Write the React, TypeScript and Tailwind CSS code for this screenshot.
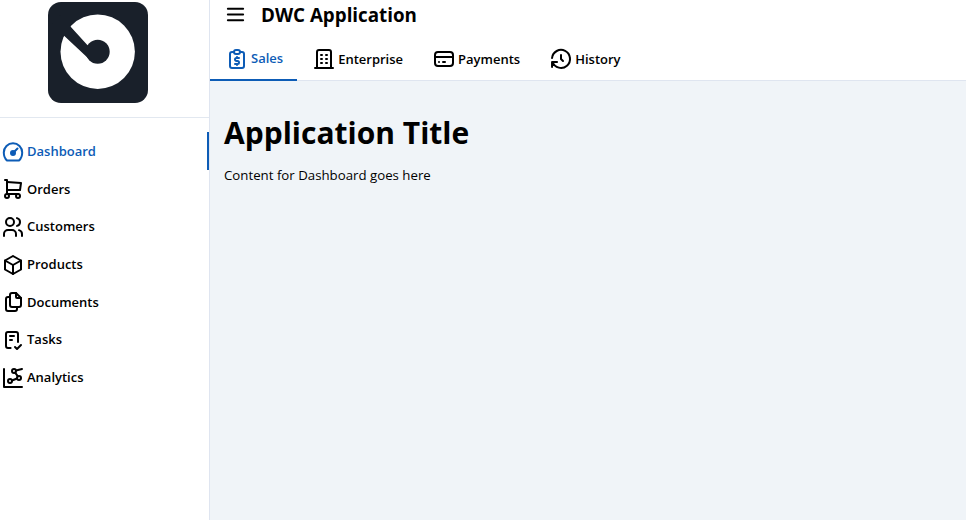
import {
  TbShoppingCart,
  TbUsers,
  TbBox,
  TbFiles,
  TbChecklist,
  TbChartDots2,
  TbMenu2,
  TbReportMoney,
  TbBuilding,
  TbCreditCard,
  TbHistory,
} from "react-icons/tb";

function DashIcon({ size = 24, className }: { size?: number; className?: string }) {
  return (
    <svg
      width={size}
      height={size}
      viewBox="0 0 24 24"
      fill="none"
      stroke="currentColor"
      strokeWidth="2"
      strokeLinecap="round"
      strokeLinejoin="round"
      className={className}
    >
      <path d="M6 20.5h12c2-1.8 3.2-4.8 3.2-8A9.2 9.2 0 0 0 2.800 12.500c0 3.200 1.200 6.200 3.200 8z" />
      <circle cx="12" cy="13" r="2" fill="currentColor" />
      <path d="M13 12l3.500-3.500" />
    </svg>
  );
}

const navItems = [
  { label: "Dashboard", icon: DashIcon, active: true },
  { label: "Orders", icon: TbShoppingCart },
  { label: "Customers", icon: TbUsers },
  { label: "Products", icon: TbBox },
  { label: "Documents", icon: TbFiles },
  { label: "Tasks", icon: TbChecklist },
  { label: "Analytics", icon: TbChartDots2 },
];

const tabs = [
  { label: "Sales", icon: TbReportMoney, active: true },
  { label: "Enterprise", icon: TbBuilding },
  { label: "Payments", icon: TbCreditCard },
  { label: "History", icon: TbHistory },
];

export default function App() {
  return (
    <div className="flex h-[520px] w-[966px] overflow-hidden bg-white font-['Open_Sans',sans-serif] text-black">
      <aside className="flex w-[210px] shrink-0 flex-col border-r border-[#dfe5f0]">
        <div className="h-[118px] shrink-0 border-b border-[#e2e8f0] pl-[48px] pt-[2px]">
          <div className="h-[101px] w-[100px]">
            <svg viewBox="0 0 100 101" className="h-full w-full">
              <rect width="100" height="101" rx="13" fill="#19202a" />
              <circle cx="49.7" cy="49.700" r="37.200" fill="#fff" />
              <path d="M12 13 L22 24 L39.300 43 L50 50 L42 58 L15.300 33 L4 22 Z" fill="#19202a" />
              <circle cx="49.700" cy="49.700" r="12" fill="#19202a" />
            </svg>
          </div>
        </div>
        <nav className="flex flex-col pt-[14.4px]">
          {navItems.map((item) => (
            <a
              key={item.label}
              className={
                item.active
                  ? "flex h-[37.65px] items-center gap-[2px] border-r-2 border-[#0d5cb6] pl-[1px] pt-[1px] text-[13px] font-semibold text-[#0d5cb6]"
                  : "flex h-[37.65px] items-center gap-[2px] pl-[1px] pt-[1px] text-[13px] font-semibold text-black"
              }
            >
              <item.icon size={24} className="shrink-0" />
              <span>{item.label}</span>
            </a>
          ))}
        </nav>
      </aside>

      <div className="flex min-w-0 flex-1 flex-col">
        <header className="flex h-[38px] shrink-0 items-start gap-[14px] pl-[14px] pt-[3px]">
          <TbMenu2 size={23} />
          <h1 className="text-[18.8px] leading-[25px] font-bold">DWC Application</h1>
        </header>
        <div className="flex h-[43px] shrink-0 border-b border-[#dfe5f0]">
          {tabs.map((tab) => (
            <button
              key={tab.label}
              className={
                tab.active
                  ? "-mb-[1px] flex items-center gap-[2px] border-b-2 border-[#0d5cb6] pl-[15px] pr-[14px] text-[13px] font-semibold text-[#0d5cb6]"
                  : "flex items-center gap-[2px] pl-[15px] pr-[14px] text-[13px] font-semibold text-black"
              }
            >
              <tab.icon size={24} />
              <span className="mt-[1px]">{tab.label}</span>
            </button>
          ))}
        </div>
        <main className="flex-1 bg-[#f0f4f8] px-[14px] pt-[30px]">
          <h2 className="text-[30px] leading-[44px] font-bold">Application Title</h2>
          <p className="mt-[10px] text-[13.25px] leading-[20px]">Content for Dashboard goes here</p>
        </main>
      </div>
    </div>
  );
}
